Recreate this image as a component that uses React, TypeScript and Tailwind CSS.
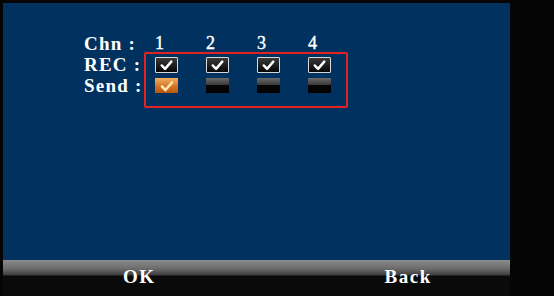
import React from 'react';

const Check = ({ color }: { color: string }) => (
  <svg viewBox="0 0 22 14" className="w-[22px] h-[14px]">
    <path d="M6 7.5 L9.5 11 L16 3.5" fill="none" stroke={color} strokeWidth="2.6" strokeLinecap="round" strokeLinejoin="round" />
  </svg>
);

const RecBox = () => (
  <div className="w-[23px] h-[16px] rounded-[1px] border border-[#d8d8d8] bg-[linear-gradient(#3a3a3a,#050505)] flex items-center justify-center">
    <Check color="#ffffff" />
  </div>
);

const SendOn = () => (
  <div className="w-[23px] h-[15px] bg-[linear-gradient(#f0b060,#d07020_60%,#b85a10)] flex items-center justify-center">
    <Check color="#fde7b0" />
  </div>
);

const SendOff = () => (
  <div className="w-[23px] h-[15px] bg-[linear-gradient(#6a6a6a,#3a3a3a_45%,#050505_50%,#000000)]" />
);

const App: React.FC = () => {
  const chans = [1, 2, 3, 4];
  return (
    <div className="w-[554px] h-[296px] bg-[#050505] overflow-hidden font-['Liberation_Serif',serif] font-bold text-white">
      <div className="pl-[3px] pt-[3px] w-[510px]">
        <div className="h-[257px] bg-[#01315f] pt-[30px] pl-[81px]">
          <div className="relative grid grid-cols-[71px_51px_51px_51px_51px] grid-rows-[21px_21px_21px] text-[19px] leading-[21px] tracking-[1.2px]">
            <div className="absolute left-[60px] top-[19px] w-[204px] h-[56px] border-2 border-[#e52222] rounded-[2px]" />
            <div className="whitespace-nowrap">Chn :</div>
            {chans.map((c) => (
              <div key={c} className="text-[18px] font-normal [-webkit-text-stroke:0.4px_white]">{c}</div>
            ))}
            <div className="whitespace-nowrap">REC :</div>
            {chans.map((c) => (
              <div key={c} className="flex items-center"><RecBox /></div>
            ))}
            <div className="whitespace-nowrap">Send :</div>
            {chans.map((c) => (
              <div key={c} className="flex items-center">{c === 1 ? <SendOn /> : <SendOff />}</div>
            ))}
          </div>
        </div>
        <div className="h-[36px] bg-[linear-gradient(#8c8c8c,#6a6a6a_25%,#3c3c3c_42%,#0a0a0a_44%,#0a0a0a)] flex text-[19px] leading-[20px] pt-[7px] tracking-[1.5px]">
          <div className="ml-[120px]">OK</div>
          <div className="ml-[229px]">Back</div>
        </div>
      </div>
    </div>
  );
};

export default App;
